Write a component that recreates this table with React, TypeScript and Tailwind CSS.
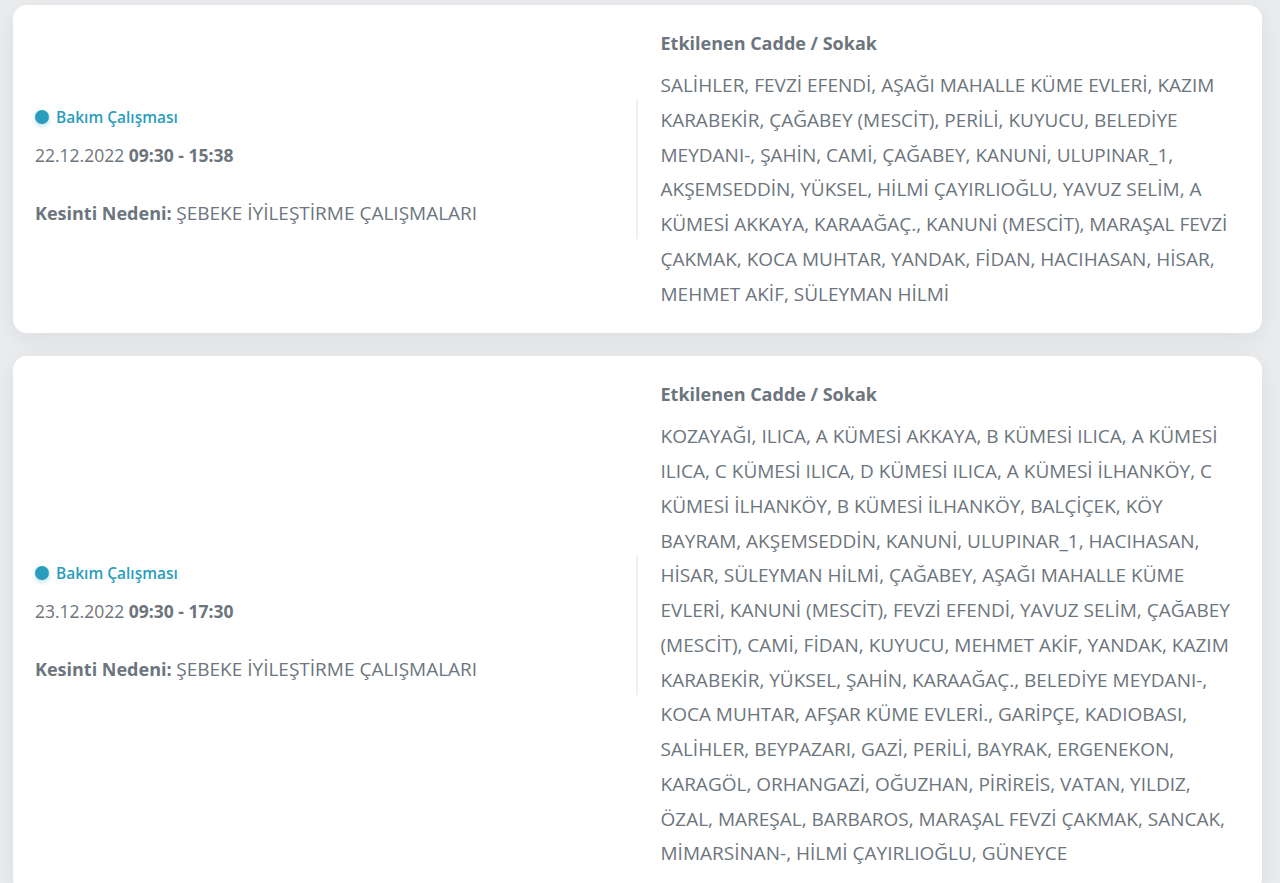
import React from 'react';

type Outage = {
  type: string;
  date: string;
  time: string;
  reason: string;
  streets: string;
};

const outages: Outage[] = [
  {
    type: 'Bakım Çalışması',
    date: '22.12.2022',
    time: '09:30 - 15:38',
    reason: 'ŞEBEKE İYİLEŞTİRME ÇALIŞMALARI',
    streets:
      'SALİHLER, FEVZİ EFENDİ, AŞAĞI MAHALLE KÜME EVLERİ, KAZIM KARABEKİR, ÇAĞABEY (MESCİT), PERİLİ, KUYUCU, BELEDİYE MEYDANI-, ŞAHİN, CAMİ, ÇAĞABEY, KANUNİ, ULUPINAR_1, AKŞEMSEDDİN, YÜKSEL, HİLMİ ÇAYIRLIOĞLU, YAVUZ SELİM, A KÜMESİ AKKAYA, KARAAĞAÇ., KANUNİ (MESCİT), MARAŞAL FEVZİ ÇAKMAK, KOCA MUHTAR, YANDAK, FİDAN, HACIHASAN, HİSAR, MEHMET AKİF, SÜLEYMAN HİLMİ',
  },
  {
    type: 'Bakım Çalışması',
    date: '23.12.2022',
    time: '09:30 - 17:30',
    reason: 'ŞEBEKE İYİLEŞTİRME ÇALIŞMALARI',
    streets:
      'KOZAYAĞI, ILICA, A KÜMESİ AKKAYA, B KÜMESİ ILICA, A KÜMESİ ILICA, C KÜMESİ ILICA, D KÜMESİ ILICA, A KÜMESİ İLHANKÖY, C KÜMESİ İLHANKÖY, B KÜMESİ İLHANKÖY, BALÇİÇEK, KÖY BAYRAM, AKŞEMSEDDİN, KANUNİ, ULUPINAR_1, HACIHASAN, HİSAR, SÜLEYMAN HİLMİ, ÇAĞABEY, AŞAĞI MAHALLE KÜME EVLERİ, KANUNİ (MESCİT), FEVZİ EFENDİ, YAVUZ SELİM, ÇAĞABEY (MESCİT), CAMİ, FİDAN, KUYUCU, MEHMET AKİF, YANDAK, KAZIM KARABEKİR, YÜKSEL, ŞAHİN, KARAAĞAÇ., BELEDİYE MEYDANI-, KOCA MUHTAR, AFŞAR KÜME EVLERİ., GARİPÇE, KADIOBASI, SALİHLER, BEYPAZARI, GAZİ, PERİLİ, BAYRAK, ERGENEKON, KARAGÖL, ORHANGAZİ, OĞUZHAN, PİRİREİS, VATAN, YILDIZ, ÖZAL, MAREŞAL, BARBAROS, MARAŞAL FEVZİ ÇAKMAK, SANCAK, MİMARSİNAN-, HİLMİ ÇAYIRLIOĞLU, GÜNEYCE',
  },
];

const OutageCard = ({ item }: { item: Outage }) => (
  <div className="flex rounded-[14px] bg-white shadow-[0_6px_24px_rgba(30,40,50,0.07)]">
    {/* sol: tür, tarih, neden */}
    <div className="w-1/2 self-center border-r-2 border-[#f0f0f0] pl-[22px] pt-2 pb-[14px]">
      <div className="flex items-center gap-[7px] text-[15.5px] leading-5 font-semibold text-[#2a9dbd]">
        <span className="h-[14px] w-[14px] rounded-full bg-[#2a9dbd] shadow-[0_2px_5px_rgba(42,157,189,0.35)]" />
        {item.type}
      </div>
      <p className="mt-4 text-[17.5px] leading-6 text-[#6c757d]">
        {item.date} <span className="font-bold">{item.time}</span>
      </p>
      <p className="mt-[34px] text-[18px] leading-6 text-[#6c757d]">
        <span className="font-bold">Kesinti Nedeni:</span>{' '}
        <span className="text-[19px]">{item.reason}</span>
      </p>
    </div>

    {/* sağ: etkilenen sokaklar */}
    <div className="w-1/2 pl-[23px] pr-[27px] pt-[25px] pb-[22px] text-[#6c757d]">
      <h3 className="text-[18px] leading-[26px] font-bold">Etkilenen Cadde / Sokak</h3>
      <p className="mt-3 text-[19px] leading-[34.75px]">{item.streets}</p>
    </div>
  </div>
);

export default function App() {
  return (
    <div
      className="min-h-screen bg-[#eaecee] pl-[13px] pr-[18px] pt-[5px] pb-6 flex flex-col gap-[23px]"
      style={{ fontFamily: '"Open Sans", "Noto Sans", sans-serif' }}
    >
      {outages.map((o) => (
        <OutageCard key={o.date} item={o} />
      ))}
    </div>
  );
}
